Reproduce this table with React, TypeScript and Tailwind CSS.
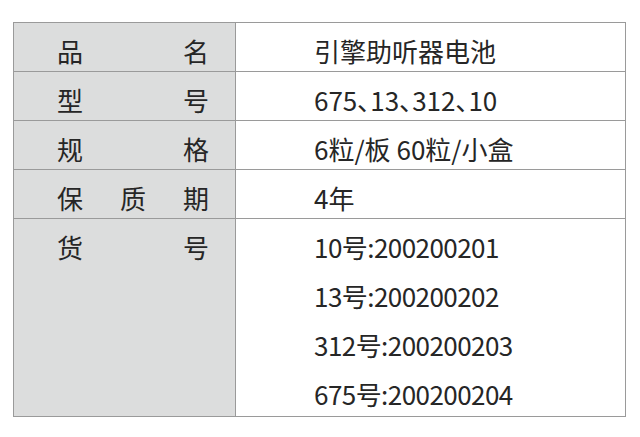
const rows: { label: string[]; values: string[]; palt?: boolean }[] = [
  { label: ['品', '名'], values: ['引擎助听器电池'] },
  { label: ['型', '号'], values: ['675、13、312、10'], palt: true },
  { label: ['规', '格'], values: ['6粒/板 60粒/小盒'] },
  { label: ['保', '质', '期'], values: ['4年'] },
  {
    label: ['货', '号'],
    values: ['10号:200200201', '13号:200200202', '312号:200200203', '675号:200200204'],
  },
];

export default function App() {
  return (
    <div className="min-h-screen bg-white pt-[22px] pl-[13px] font-['Noto_Sans_CJK_SC',sans-serif] text-[26px] text-[#262626]">
      <div className="w-[613px] border border-[#9a9a9a]">
        {rows.map((row, i) => {
          const multi = row.values.length > 1;
          return (
            <div
              key={i}
              className={`flex ${i > 0 ? 'border-t border-[#9a9a9a]' : ''} ${
                multi ? 'h-[197px]' : 'h-[48px]'
              } box-content`}
            >
              <div className="w-[222px] shrink-0 border-r border-[#9a9a9a] bg-[#dcdddd] pl-[43px] pr-[26px] pt-[3px]">
                <div className="flex justify-between leading-[49px]">
                  {row.label.map((c, j) => (
                    <span key={j}>{c}</span>
                  ))}
                </div>
              </div>
              <div
                className={`flex-1 pl-[78px] pt-[3px] ${row.palt ? "[font-feature-settings:'palt']" : ''} ${
                  multi ? 'tracking-[-0.55px]' : ''
                }`}
              >
                {row.values.map((v, j) => (
                  <div key={j} className="leading-[49px] whitespace-nowrap">
                    {v}
                  </div>
                ))}
              </div>
            </div>
          );
        })}
      </div>
    </div>
  );
}
